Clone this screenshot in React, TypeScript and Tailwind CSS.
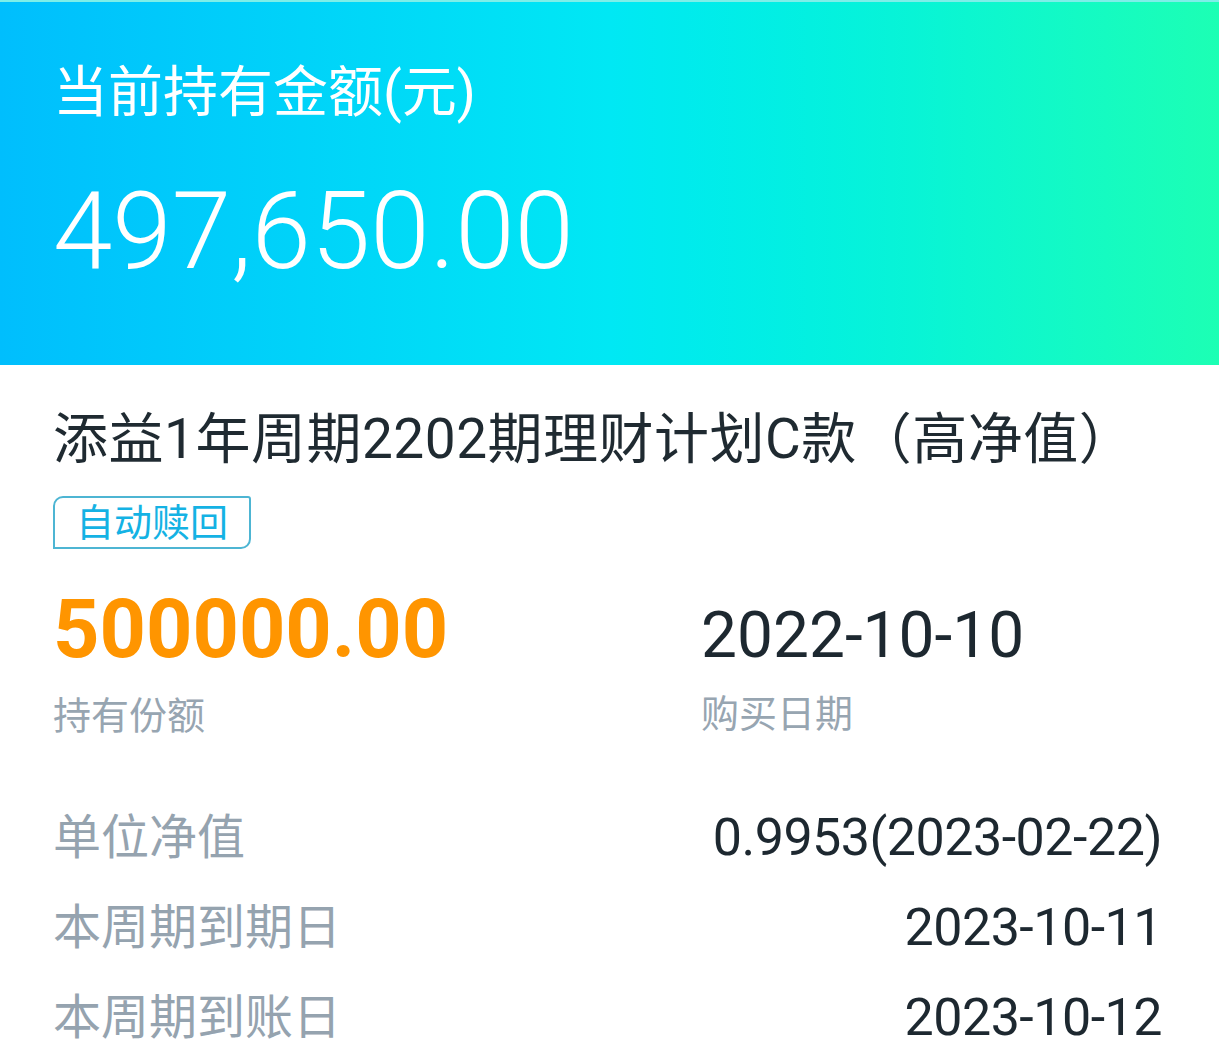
const font = 'font-["Roboto","Noto_Sans_CJK_SC",sans-serif]';

const rows = [
  { label: '单位净值', value: '0.9953(2023-02-22)' },
  { label: '本周期到期日', value: '2023-10-11' },
  { label: '本周期到账日', value: '2023-10-12' },
];

export default function App() {
  return (
    <div className={`${font} w-[1219px] h-[1050px] overflow-hidden bg-white`}>
      {/* Header: current holding */}
      <div className="h-[365px] pl-[53px] pt-[63px] bg-linear-to-r from-[#00befd] via-[#00e8f4] via-50% to-[#1cffb4] border-t-2 border-[#7eeee8]">
        <p className="text-white text-[55px] leading-none">当前持有金额(元)</p>
        <p className="mt-[58px] text-white text-[107px] leading-none font-light">497,650.00</p>
      </div>

      <div className="pl-[53px] pr-[57px]">
        <h1 className="mt-[47px] text-[#1f2a31] text-[55px] leading-none tracking-[0.5px]">添益1年周期2202期理财计划C款（高净值）</h1>

        <div className="mt-[29px] inline-flex items-center h-[53px] px-[21px] border-2 border-[#4db5d3] rounded-tl-[10px] rounded-tr-[3px] rounded-br-[10px] text-[#14b2e4] text-[38px] leading-none">
          自动赎回
        </div>

        {/* Holding and purchase date */}
        <div className="mt-[40px] grid grid-cols-[648px_1fr] items-baseline">
          <div className="flex flex-col">
            <span className="text-[#ff9500] text-[81px] font-bold leading-none">500000.00</span>
            <span className="mt-[27px] text-[#97a5b1] text-[38px] leading-none">持有份额</span>
          </div>
          <div className="flex flex-col">
            <span className="text-[#1d2830] text-[64px] leading-none">2022-10-10</span>
            <span className="mt-[27px] text-[#97a5b1] text-[38px] leading-none">购买日期</span>
          </div>
        </div>

        {/* Detail rows */}
        <div className="mt-[58px] flex flex-col">
          {rows.map((r) => (
            <div key={r.label} className="h-[90px] flex items-center justify-between">
              <span className="text-[#95a3af] text-[48px] leading-none">{r.label}</span>
              <span className="text-[#1d2830] text-[52px] leading-none tracking-[-0.5px]">{r.value}</span>
            </div>
          ))}
        </div>
      </div>
    </div>
  );
}
